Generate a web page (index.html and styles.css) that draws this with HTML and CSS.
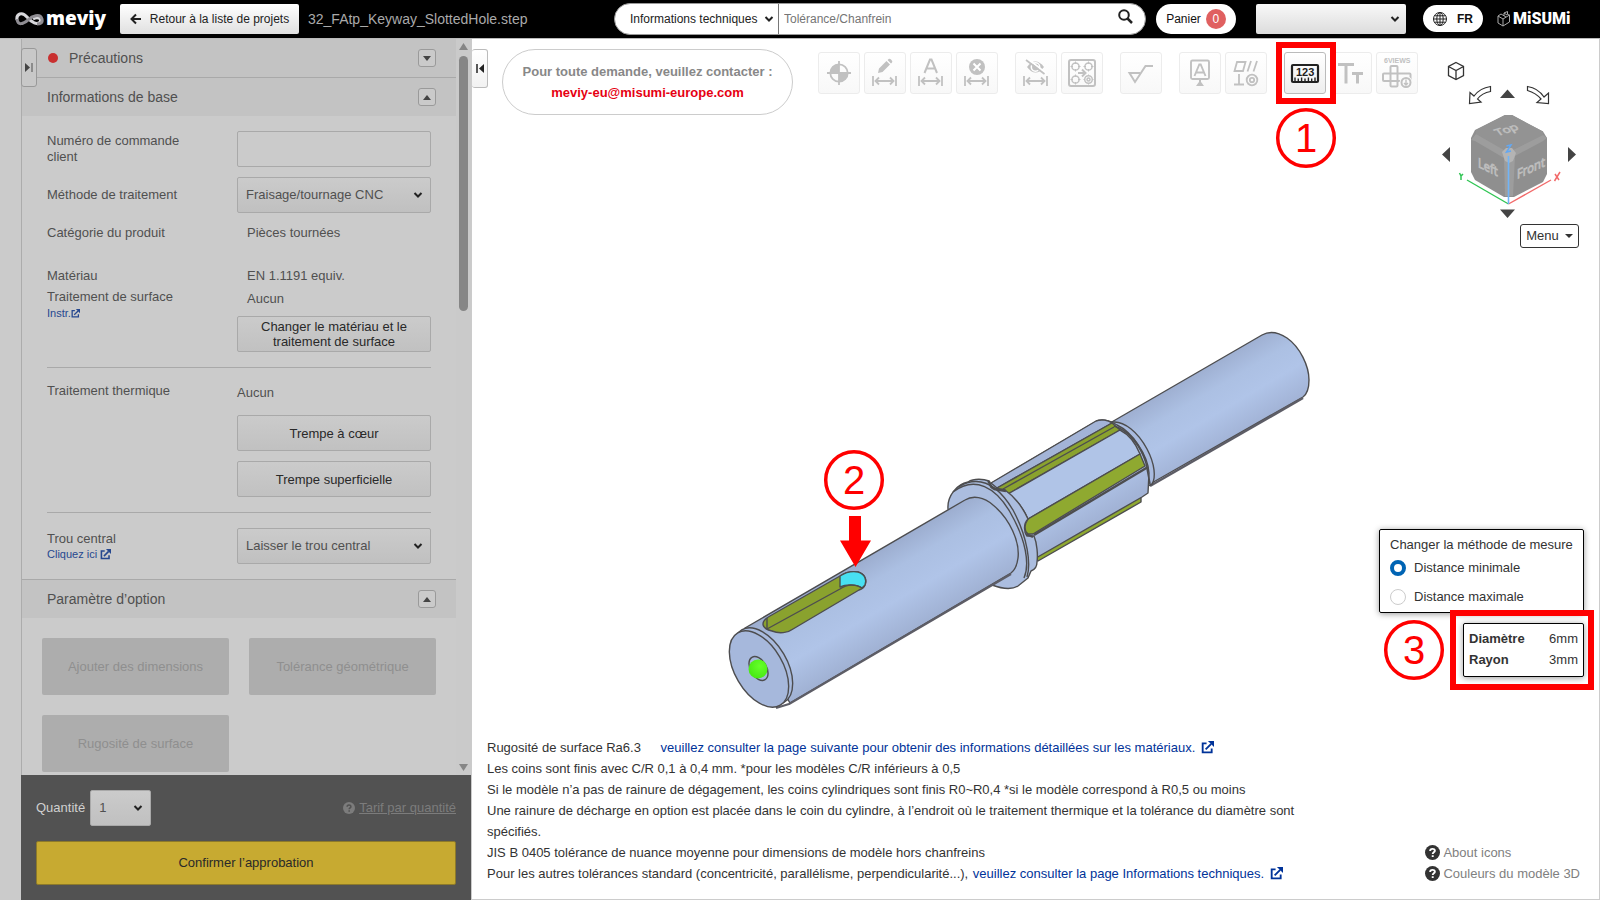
FILE: index.html
```html
<!DOCTYPE html>
<html lang="fr">
<head>
<meta charset="utf-8">
<title>meviy</title>
<link rel="stylesheet" href="styles.css">
</head>
<body>
<svg class="defs" width="0" height="0" aria-hidden="true">
  <symbol id="chev" viewBox="0 0 10 8"><path d="M1.500 2 5 5.500 8.500 2" fill="none" stroke="#222" stroke-width="2"/></symbol>
  <symbol id="ext" viewBox="0 0 14 14"><path d="M6 2.500H1.800V12.200H11.500V8M5 9 11 3" fill="none" stroke="currentColor" stroke-width="2"/><path d="M7.500 0H14V6.500Z" fill="currentColor"/></symbol>
  <symbol id="help" viewBox="0 0 14 14"><circle cx="7" cy="7" r="7" fill="currentColor"/><path class="help-mark" d="M4.800 5.600C4.800 2.900 9.200 3 9.200 5.400 9.200 6.900 7.200 6.800 7.200 8.400M7.200 9.600V11.300" fill="none" stroke-width="1.800"/></symbol>
  <symbol id="dim" viewBox="0 0 42 42"><path d="M9 24V34M32 24V34M11.500 29H29.500M15 25.500 11.500 29 15 32.500M26 25.500 29.500 29 26 32.500" fill="none" stroke="currentColor" stroke-width="1.800"/></symbol>
</svg>

<header class="topbar">
  <a class="brand" href="#" aria-label="meviy">
    <svg width="30" height="18" viewBox="0 0 30 18"><path d="M2 10C1 4 7 1 12 7C17 13 22 15 25 12C27 9 23 6 18 9" fill="none" stroke="#d8d8dc" stroke-width="3"/><path d="M2 9C3 16 8 14 13 10C17 6 25 3 27 9C28 13 25 14 22 14" fill="none" stroke="#8f8d93" stroke-width="3"/></svg>
    <span>meviy</span>
  </a>
  <button class="back" type="button"><svg width="12" height="12" viewBox="0 0 12 12"><path d="M11 6H2M6 1.500 1.500 6 6 10.500" fill="none" stroke="#222" stroke-width="2"/></svg>Retour à la liste de projets</button>
  <span class="filename">32_FAtp_Keyway_SlottedHole.step</span>
  <form class="search">
    <div class="pick pick-search"><select aria-label="Type de recherche"><option>Informations techniques</option></select><svg width="10" height="8"><use href="#chev"/></svg></div>
    <input type="text" aria-label="Recherche" placeholder="Tolérance/Chanfrein">
    <button type="button" aria-label="Rechercher"><svg width="15" height="15" viewBox="0 0 15 15"><circle cx="6" cy="6" r="4.800" fill="none" stroke="#222" stroke-width="2"/><path d="M9.500 9.500 14 14" stroke="#222" stroke-width="2.500"/></svg></button>
  </form>
  <button class="cart" type="button">Panier <span>0</span></button>
  <div class="pick pick-account"><select aria-label="Compte"><option></option></select><svg width="10" height="8"><use href="#chev"/></svg></div>
  <button class="lang" type="button"><svg width="14" height="14" viewBox="0 0 14 14" fill="none" stroke="#222"><circle cx="7" cy="7" r="6.500"/><ellipse cx="7" cy="7" rx="3.200" ry="6.500"/><path d="M.5 7H13.500M7 .5V13.500M1.500 3.800H12.500M1.500 10.200H12.500"/></svg>FR</button>
  <a class="misumi" href="#"><svg width="14" height="16" viewBox="0 0 14 16" fill="none" stroke="#aaa"><path d="M1 5 6 8V15L1 12ZM6 15 12.500 11V4L6 8M1 5 4 3 9 6M7 5V2L10.500.5V3.500L12.500 4M7 2 10 4"/></svg><span>MiSUMi</span></a>
</header>

<div class="workspace">
  <aside class="sidebar">
    <button class="side-tab" type="button" aria-label="Replier"><svg width="8" height="9" viewBox="0 0 8 9"><path d="M0 0 5 4.500 0 9Z" fill="#444"/><path d="M7 0V9" stroke="#777" stroke-width="1.500"/></svg></button>
    <div class="scroll">
      <div class="panel">
        <section>
          <h2 class="bar bar-first"><i class="dot"></i>Précautions<button type="button" aria-label="Déplier"><svg width="8" height="5" viewBox="0 0 8 5"><path d="M0 0H8L4 5Z"/></svg></button></h2>
        </section>
        <section>
          <h2 class="bar">Informations de base<button type="button" aria-label="Replier"><svg width="8" height="5" viewBox="0 0 8 5"><path d="M0 5H8L4 0Z"/></svg></button></h2>
          <div class="fields">
            <div class="row mid"><label for="ord">Numéro de commande<br>client</label><input id="ord" type="text"></div>
            <div class="row mid"><label for="meth">Méthode de traitement</label><div class="pick"><select id="meth"><option>Fraisage/tournage CNC</option></select><svg width="10" height="8"><use href="#chev"/></svg></div></div>
            <div class="row category"><span>Catégorie du produit</span><span class="val">Pièces tournées</span></div>
            <div class="row material"><span>Matériau</span><span class="val">EN 1.1191 equiv.</span></div>
            <div class="row surface">
              <div>Traitement de surface<a class="tight" href="#">Instr.<svg width="9" height="9"><use href="#ext"/></svg></a></div>
              <div class="stack"><span class="val">Aucun</span><button type="button">Changer le matériau et le<br>traitement de surface</button></div>
            </div>
            <hr>
            <div class="row thermal">
              <span>Traitement thermique</span>
              <div class="stack"><span>Aucun</span><button type="button">Trempe à cœur</button><button type="button">Trempe superficielle</button></div>
            </div>
            <hr>
            <div class="row mid">
              <div><label for="hole">Trou central</label><a href="#">Cliquez ici <svg width="11" height="11"><use href="#ext"/></svg></a></div>
              <div class="pick"><select id="hole"><option>Laisser le trou central</option></select><svg width="10" height="8"><use href="#chev"/></svg></div>
            </div>
          </div>
        </section>
        <section>
          <h2 class="bar bar-top">Paramètre d’option<button type="button" aria-label="Replier"><svg width="8" height="5" viewBox="0 0 8 5"><path d="M0 5H8L4 0Z"/></svg></button></h2>
          <div class="options">
            <button type="button" disabled>Ajouter des dimensions</button>
            <button type="button" disabled>Tolérance géométrique</button>
            <button type="button" disabled>Rugosité de surface</button>
          </div>
        </section>
      </div>
      <div class="track">
        <svg width="9" height="7" viewBox="0 0 9 7"><path d="M4.500 0 9 7H0Z"/></svg>
        <div class="thumb"></div>
        <svg width="9" height="7" viewBox="0 0 9 7"><path d="M0 0H9L4.500 7Z"/></svg>
      </div>
    </div>
    <footer class="order">
      <div class="qty">
        <label for="qty">Quantité</label>
        <div class="pick pick-qty"><select id="qty"><option>1</option></select><svg width="10" height="8"><use href="#chev"/></svg></div>
        <a href="#"><svg width="12" height="12"><use href="#help"/></svg><u>Tarif par quantité</u></a>
      </div>
      <button class="confirm" type="button">Confirmer l’approbation</button>
    </footer>
  </aside>

  <main class="viewer">
    <svg class="model" viewBox="472 39 1127 860" role="img" aria-label="Modèle 3D">
      <defs>
        <linearGradient id="s1" gradientUnits="userSpaceOnUse" x1="855" y1="564" x2="899" y2="639"><stop offset="0" stop-color="#9cadcf"/><stop offset=".28" stop-color="#abbfe2"/><stop offset=".6" stop-color="#b0c4e8"/><stop offset="1" stop-color="#a0b1d3"/></linearGradient>
        <linearGradient id="s2" gradientUnits="userSpaceOnUse" x1="1189" y1="378" x2="1227" y2="442"><stop offset="0" stop-color="#9fb0d2"/><stop offset=".3" stop-color="#acc0e3"/><stop offset=".6" stop-color="#b0c4e8"/><stop offset="1" stop-color="#a2b3d6"/></linearGradient>
        <radialGradient id="ball" cx=".6" cy=".35" r=".7"><stop offset="0" stop-color="#66ff2a"/><stop offset="1" stop-color="#46e812"/></radialGradient>
      </defs>
      <g stroke="#4d4d4f" stroke-width="1.400" stroke-linejoin="round">
        <path d="M1110 423 1262 335C1269 331 1278 332 1287 338C1300 347 1309 366 1309 380C1309 389 1307 394 1303 397L1150 484Z" fill="url(#s2)"/>
        <path d="M1303 398 1150 486" stroke="#5d5d66" stroke-width="2.500" fill="none"/>
        <path d="M1113 422C1124 421 1138 432 1147 449C1155 464 1156 478 1152 484L1140 490 1100 425Z" fill="#a9bbdf"/>
        <path d="M1035 557 1130 502 1141 497V502L1038 561Z" fill="#8fa930"/>
        <path d="M990 484 1095 422C1101 418 1110 420 1117 425C1132 432 1148 455 1149 473L1148 493 1142 497 1036 558 1005 520Z" fill="url(#s2)"/>
        <path d="M991 483 1096 421C1101 419 1108 420 1112 423L997 488Z" fill="#a3b4d7"/>
        <path d="M997 488 1112 423 1120 430 1008 494Z" fill="#8aa22e"/><path d="M1003 489 1114 427"/>
        <path d="M1008 494 1120 430C1130 435 1136 444 1140 454L1028 519C1023 508 1015 498 1008 494Z" fill="#b0c4e7"/>
        <path d="M1028 519 1140 454 1145 466 1033 534H1028C1023 530 1025 523 1028 519Z" fill="#8fa930"/>
        <path d="M1034 535 1148 467" stroke-width="2.400"/>
        <path d="M1114 426C1129 430 1141 447 1146 463L1150 484M1124 431C1133 436 1142 449 1146 462" fill="none" stroke-width="1.600"/>
        <path d="M948 509C947 496 957 484 968 482C974 478 984 479 989 481C991 482 989 486 993 488C997 490 1000 488 1005 490C1015 497 1023 508 1028 519C1023 524 1024 532 1027 536L1034 536C1037 543 1038 555 1037 562C1037 567 1034 570 1031 571L1028 578 1018 586C1010 591 1000 588 992 585Z" fill="#abbddf"/>
        <path d="M988 481C991 484 989 487 994 489L1006 491M1026 534 1033 537" fill="none" stroke-width="2.400"/>
        <path d="M953 492C975 475 996 488 1010 512C1026 540 1030 564 1024 578M958 487C980 474 998 485 1013 510C1028 538 1031 564 1027 577" fill="none"/>
        <path d="M745 628 965 500C973 495 984 497 993 505C1010 519 1020 542 1018 558C1017 566 1015 570 1011 573L790 703Z" fill="url(#s1)"/>
        <path d="M1011 574 789 704 776 708" fill="none" stroke="#5d5d66" stroke-width="2.200"/>
        <ellipse cx="763" cy="666" rx="24" ry="42" transform="rotate(-30.400 763 666)" fill="#a8badd"/>
        <ellipse cx="759" cy="669" rx="24" ry="42" transform="rotate(-30.400 759 669)" fill="#a6b8dc"/>
        <ellipse cx="758.500" cy="668.500" rx="8" ry="13" transform="rotate(-30.400 758.500 668.500)" fill="#a6b8dc"/>
        <path d="M770 616 840 576C846 572 852 571 858 572C865 574 867 580 865 585C864 588 862 589 859 590L793 629C788 633 779 634 772 631C762 629 759 622 770 616Z" fill="#8aa22e"/>
        <path d="M840 576C846 572 852 571 858 572C865 574 867 580 865 585L862 588C856 584 846 584 840 587Z" fill="#48e0f2"/>
        <path d="M767 618V629L840 589C847 584 857 584 862 588" fill="none"/>
      </g>
      <circle cx="758" cy="669" r="9.500" fill="url(#ball)"/>
    </svg>

    <button class="side-tab view-tab" type="button" aria-label="Replier"><svg width="8" height="9" viewBox="0 0 8 9"><path d="M8 0 3 4.500 8 9Z" fill="#222"/><path d="M1 0V9" stroke="#222" stroke-width="1.500"/></svg></button>

    <div class="head">
      <div class="contact"><b>Pour toute demande, veuillez contacter :</b><a href="#">meviy-eu@misumi-europe.com</a></div>
      <div class="tools">
        <div>
          <button type="button" disabled aria-label="Origine"><svg viewBox="0 0 42 42"><circle cx="21" cy="21" r="8.700" fill="none" stroke="currentColor" stroke-width="1.800"/><path d="M21 21V12A9 9 0 0 0 12 21ZM21 21V30A9 9 0 0 0 30 21Z" fill="currentColor"/><path d="M21 9V33M9 21H33" stroke="currentColor" stroke-width="1.800"/></svg></button>
          <button type="button" disabled aria-label="Modifier la cote"><svg viewBox="0 0 42 42"><use href="#dim"/><path d="M14 21 15 16.500 22.500 9 26 12.500 18.500 20ZM23.500 8 25 6.800Q26 6.500 27.500 8 29 9.500 28 10.500L27 11.500Z" fill="currentColor"/></svg></button>
          <button type="button" disabled aria-label="Texte de cote"><svg viewBox="0 0 42 42"><use href="#dim"/><path d="M14.500 21 20 7.500H21.500L27 21M16.500 16.500H25" fill="none" stroke="currentColor" stroke-width="2"/></svg></button>
          <button type="button" disabled aria-label="Supprimer la cote"><svg viewBox="0 0 42 42"><use href="#dim"/><circle cx="21" cy="15" r="8" fill="currentColor"/><path d="M17.500 11.500 24.500 18.500M24.500 11.500 17.500 18.500" stroke="#fff" stroke-width="2"/></svg></button>
        </div>
        <div>
          <button type="button" disabled aria-label="Masquer les cotes"><svg viewBox="0 0 42 42"><use href="#dim"/><path d="M12 15Q20.500 4 29 15 20.500 26 12 15Z" fill="currentColor"/><circle cx="20.500" cy="15" r="4.200" fill="none" stroke="#fff" stroke-width="1.500"/><path d="M13 7 31 21" stroke="#fff" stroke-width="1.800"/><path d="M11 8 29.500 22" stroke="currentColor" stroke-width="1.700"/></svg></button>
          <button type="button" disabled aria-label="Grouper les trous"><svg viewBox="0 0 42 42" fill="none" stroke="currentColor" stroke-width="1.500"><rect x="8" y="8" width="26" height="26" rx="2" stroke-width="2"/><circle cx="14.500" cy="14.500" r="3.600"/><circle cx="27.500" cy="14.500" r="3.600"/><circle cx="14.500" cy="27.500" r="3.600"/><circle cx="27.500" cy="27.500" r="3.800"/><circle cx="27.500" cy="27.500" r="1.500"/><path d="M14.500 9.500V12M14.500 17V19.500M9.500 14.500H12M17 14.500H19.500M27.500 9.500V12M27.500 17V19.500M22.500 14.500H25M30 14.500H32.500M14.500 22.500V25M14.500 30V32.500M9.500 27.500H12M17 27.500H19.500M22.500 27.500H24M31 27.500H32.500M27.500 22.500V24M27.500 31V32.500" stroke-width="1"/><path d="M17 21H24M21 17.500 24.500 21 21 24.500" stroke-width="2"/></svg></button>
        </div>
        <div>
          <button type="button" disabled aria-label="Rugosité"><svg viewBox="0 0 42 42"><path d="M20 21H9.500L15 30 25.500 14H33" fill="none" stroke="currentColor" stroke-width="2"/></svg></button>
        </div>
        <div>
          <button type="button" disabled aria-label="Référence"><svg viewBox="0 0 42 42"><path d="M13.500 8.500H28.500Q30 8.500 30 10V25.500Q30 27 28.500 27H13.500Q12 27 12 25.500V10Q12 8.500 13.500 8.500ZM15.500 24 20.300 12.500H21.700L26.500 24M17.500 20.500H24.500" fill="none" stroke="currentColor" stroke-width="1.900"/><path d="M21 27V31" stroke="currentColor" stroke-width="2"/><path d="M21 28.500 25 34H17Z" fill="currentColor"/></svg></button>
          <button type="button" disabled aria-label="Tolérance géométrique"><svg viewBox="0 0 42 42" fill="none" stroke="currentColor" stroke-width="1.800"><path d="M12 10H20.500L18 19H9.500ZM26 9 22.500 19.500M32 9 28.500 19.500M9 32.500H19M14 22V32.500"/><circle cx="27" cy="28" r="5.300"/><circle cx="27" cy="28" r="2.200"/></svg></button>
        </div>
        <div>
          <button class="active" type="button" aria-label="Mesurer"><svg viewBox="0 0 42 42"><rect x="8" y="13" width="26" height="17" rx="1" fill="none" stroke="#222" stroke-width="2.200"/><path d="M11 29V25.500M14.300 29V26.500M17.600 29V25.500M21 29V26.500M24.400 29V25.500M27.700 29V26.500M31 29V25.500" stroke="#222" stroke-width="1.400"/><text x="12" y="24" class="measure">123</text></svg></button>
          <button type="button" disabled aria-label="Taille du texte"><svg viewBox="0 0 42 42"><path d="M8 12.500H24M16 12.500V31.500M22 21.500H33M27.500 21.500V31.500" fill="none" stroke="currentColor" stroke-width="3"/></svg></button>
          <button type="button" disabled aria-label="Six vues"><svg viewBox="0 0 42 42" fill="none" stroke="currentColor" stroke-width="2"><text x="8" y="11" class="views">6VIEWS</text><rect x="7" y="21.500" width="27.500" height="7.500" rx="1"/><rect x="14.500" y="14" width="7" height="20.500" rx="1"/><circle cx="30" cy="30.500" r="6.500" fill="#fbfbfb" stroke="none"/><circle cx="30" cy="30.500" r="4.500"/><path d="M30 27.500V33M28 31 30 33 32 31" stroke-width="1.400"/></svg></button>
        </div>
      </div>
    </div>

    <div class="navigator">
      <svg width="152" height="164" viewBox="1432 56 152 164" role="img" aria-label="Cube de vue">
        <path d="M1456 62.500 1463.500 66.500V75.500L1456 79.500 1448.500 75.500V66.500ZM1448.500 66.500 1456 70.500 1463.500 66.500M1456 70.500V79.500" fill="#fff" stroke="#333" stroke-width="1.300"/>
        <path d="M1490.500 86.500Q1480 88 1474 96L1470 92.500 1469.500 103.500 1481 102 1477.500 99Q1482 93 1490.500 91.500ZM1527.500 86.500Q1538 88 1544 97L1548.500 93 1548.500 103.500 1537 102.500 1541 99Q1536 93 1527.500 90.500Z" fill="#fff" stroke="#333" stroke-width="1.200"/>
        <path d="M1507.500 89.500 1515 98H1500ZM1507.500 218 1500 209.500H1515ZM1442 154.500 1450 147V162ZM1576 154.500 1568 147V162Z" fill="#444"/>
        <path d="M1505 115 1512 115 1543 131.500 1547 138V174L1543 182 1514 197H1504L1475 180 1471 172V138L1475 130Z" fill="#8f8f8f"/>
        <path d="M1505 115 1512 115 1543 131.500 1543 135 1513 150 1509 148 1504 150 1476 134V130Z" fill="#939393"/>
        <path d="M1471 140 1476 134 1504 150 1509 148 1513 150 1543 135 1547 138 1543 141 1515 156 1513 196H1505L1504 158 1475 141Z" fill="#9d9d9d"/>
        <path d="M1502 152 1506 148H1512L1516 153 1513 161 1509 163 1505 161Z" fill="#b4b4b4"/>
        <g class="faces"><text transform="matrix(.94 -.3 .5 .65 1498 136)">Top</text><text transform="matrix(.86 .4 0 1 1478 167)">Left</text><text transform="matrix(.86 -.4 0 1 1517 179)">Front</text></g>
        <path d="M1508.500 204 1467 180" stroke="#2fc553" stroke-width="1.400"/><path d="M1508.500 204 1551 180" stroke="#f26a6a" stroke-width="1.400"/><path d="M1508.500 204V156" stroke="#70b4f8" stroke-width="1.600"/>
        <g fill="none" stroke-width="1.500"><path d="M1506.500 146 1511 145 1506.500 152 1511 151" stroke="#62a8f4"/><path d="M1459.500 173 1461 176 1463 174M1461 176V180" stroke="#2fc553"/><path d="M1555 174 1559 180M1560 172 1554.500 181" stroke="#f26a6a"/></g>
      </svg>
      <button class="menu" type="button">Menu <svg width="8" height="4" viewBox="0 0 8 4"><path d="M0 0H8L4 4Z" fill="#333"/></svg></button>
    </div>

    <div class="readout">
      <fieldset class="box method">
        <legend>Changer la méthode de mesure</legend>
        <label><input type="radio" name="d" checked>Distance minimale</label>
        <label><input type="radio" name="d">Distance maximale</label>
      </fieldset>
      <div class="box result"><table><tr><th>Diamètre</th><td>6mm</td></tr><tr><th>Rayon</th><td>3mm</td></tr></table></div>
    </div>

    <div class="foot">
      <div class="notes">
        <p>Rugosité de surface Ra6.3 <a class="apart" href="#">veuillez consulter la page suivante pour obtenir des informations détaillées sur les matériaux. <svg width="13" height="13"><use href="#ext"/></svg></a></p>
        <p>Les coins sont finis avec C/R 0,1 à 0,4 mm. *pour les modèles C/R inférieurs à 0,5</p>
        <p>Si le modèle n’a pas de rainure de dégagement, les coins cylindriques sont finis R0~R0,4 *si le modèle correspond à R0,5 ou moins</p>
        <p>Une rainure de décharge en option est placée dans le coin du cylindre, à l’endroit où le traitement thermique et la tolérance du diamètre sont spécifiés.</p>
        <p>JIS B 0405 tolérance de nuance moyenne pour dimensions de modèle hors chanfreins</p>
        <p>Pour les autres tolérances standard (concentricité, parallélisme, perpendicularité...), <a href="#">veuillez consulter la page Informations techniques. <svg width="13" height="13"><use href="#ext"/></svg></a></p>
      </div>
      <div class="legend">
        <a href="#"><svg width="15" height="15"><use href="#help"/></svg>About icons</a>
        <a href="#"><svg width="15" height="15"><use href="#help"/></svg>Couleurs du modèle 3D</a>
      </div>
    </div>
  </main>
</div>

<svg class="callouts" viewBox="0 0 1600 900">
  <g fill="none" stroke="#f00"><rect x="1279" y="45" width="54" height="56" stroke-width="6"/><rect x="1453" y="613" width="138" height="74" stroke-width="6"/><g stroke-width="3.500"><circle cx="1306" cy="138" r="28.300"/><circle cx="854" cy="480" r="28.300"/><circle cx="1414" cy="650" r="28.300"/></g></g>
  <path d="M849 516H861V540.500H871L855.500 567 840 540.500H849Z" fill="#f00"/>
  <g class="num"><text x="1306" y="152">1</text><text x="854" y="494">2</text><text x="1414" y="664">3</text></g>
</svg>
</body>
</html>
```
FILE: styles.css
```css
* { box-sizing: border-box; }
body { margin: 0; height: 100vh; display: flex; flex-direction: column; position: relative; overflow: hidden; background: #fff; color: #333; font: 13px/16px "Liberation Sans", Arial, sans-serif; }
button, input, select { font: inherit; color: inherit; margin: 0; padding: 0; }
button { border: 0; background: none; }
a { color: #003399; text-decoration: none; }
.defs { position: absolute; }
.help-mark { stroke: var(--mark, #fff); }

.pick { display: grid; align-items: center; }
.pick > * { grid-area: 1 / 1; }
.pick > svg { justify-self: end; margin-right: 8px; pointer-events: none; }
.pick select { appearance: none; width: 100%; height: 36px; padding: 0 8px; border: 1px solid #a9a9a9; border-radius: 2px; background: linear-gradient(#cbcbcb, #c0c0c0); }

.topbar { flex: none; height: 39px; padding-left: 15px; padding-bottom: 1px; display: flex; align-items: center; background: #000; border-bottom: 1px solid #bbb; font-size: 12px; }
.brand { width: 105px; display: flex; align-items: center; gap: 1px; color: #fff; font: 800 19px/24px "Open Sans", sans-serif; }
.brand span { margin-top: -2px; }
.back { width: 179px; height: 30px; display: flex; align-items: center; justify-content: center; gap: 8px; border-radius: 2px; background: linear-gradient(#fff, #e0e0e0); color: #222; }
.filename { width: 315px; padding-left: 9px; font-size: 14px; color: #aaa; }
.search { width: 532px; height: 32px; display: flex; align-items: center; border-radius: 16px; background: #fff; overflow: hidden; border: 1px solid #999; }
.pick-search { width: 164px; border-right: 1px solid #777; }
.pick-search select { border: 0; background: none; padding: 0 0 0 15px; color: #222; }
.pick-search > svg { margin-right: 4px; }
.search input { flex: 1; border: 0; padding-left: 5px; outline: 0; }
.search input::placeholder { color: #757575; }
.search button { width: 40px; height: 30px; }
.cart { width: 80px; height: 30px; margin-left: 10px; display: flex; align-items: center; justify-content: center; gap: 5px; border-radius: 15px; background: #fff; color: #111; }
.cart span { width: 20px; height: 20px; line-height: 20px; border-radius: 50%; background: #e06060; color: #fff; }
.pick-account { width: 150px; margin-left: 20px; }
.pick-account select { height: 30px; border: 0; background: linear-gradient(#f8f8f8, #dcdcdc); }
.pick-account > svg { margin-right: 6px; }
.lang { width: 60px; height: 27px; margin-left: 17px; display: flex; align-items: center; justify-content: center; gap: 10px; border-radius: 14px; background: #fff; color: #111; font-weight: bold; }
.misumi { margin-left: 14px; display: flex; align-items: center; gap: 2px; color: #fff; font: 900 16px/20px Roboto, sans-serif; }

.workspace { flex: 1; min-height: 0; display: flex; }
.sidebar { flex: none; width: 472px; padding: 0 1px 0 21px; display: flex; flex-direction: column; position: relative; background: #cbcbcb; color: #505050; }
.side-tab { position: absolute; left: 21px; top: 9px; width: 16px; height: 39px; display: grid; place-items: center; border: 1px solid #999; border-radius: 3px; background: #c8c8c8; }
.view-tab { left: 0; top: 10px; border-color: #bbb; border-left: 0; background: linear-gradient(#fff, #f2f2f2); }
.scroll { flex: 1; min-height: 0; display: flex; overflow: hidden; border-left: 1px solid #acacac; }
.panel { flex: 1; }
.track { width: 15px; padding: 4px 3px; display: flex; flex-direction: column; align-items: center; background: #cacaca; }
.track svg { flex: none; fill: #868686; }
.thumb { width: 9px; height: 255px; margin: 6px 0 auto; border-radius: 5px; background: #868686; }
.bar { margin: 0; height: 38px; padding: 0 20px 0 25px; display: flex; align-items: center; background: #c3c3c3; font-size: 14px; font-weight: normal; }
.bar button { margin-left: auto; width: 18px; height: 18px; display: grid; place-items: center; border: 1px solid #9a9a9a; border-radius: 3px; background: #cacaca; }
.bar svg { fill: #444; }
.bar-first { height: 39px; border-bottom: 1px solid #a9a9a9; }
.bar-top { height: 39px; border-top: 1px solid #a9a9a9; }
.dot { width: 10px; height: 10px; margin: 0 11px 0 1px; border-radius: 50%; background: #c93030; }
.fields { padding: 15px 25px; display: flex; flex-direction: column; gap: 10px; }
.row { display: grid; grid-template-columns: 190px 1fr; }
.mid { align-items: center; }
.row input { height: 36px; border: 1px solid #a9a9a9; border-radius: 2px; background: #cbcbcb; padding: 0 8px; min-width: 0; }
.row a { display: flex; align-items: center; gap: 3px; font-size: 11px; line-height: 14px; color: #26488f; }
.row a.tight { gap: 0; line-height: 16px; }
.val { padding-left: 10px; }
.category { margin-top: 2px; }
.material { margin-top: 17px; }
.surface { margin-top: -5px; }
.stack { display: flex; flex-direction: column; gap: 10px; padding-top: 2px; }
.surface .stack { gap: 9px; }
.stack button { height: 36px; border: 1px solid #a9a9a9; border-radius: 2px; background: linear-gradient(#cbcbcb, #c1c1c1); color: #292929; line-height: 15px; }
.fields hr { width: 100%; margin: 5px 0; border: 0; border-top: 1px solid #a9a9a9; }
.thermal .stack span { margin-bottom: 4px; }
.options { padding: 20px; display: grid; grid-template-columns: 1fr 1fr; gap: 20px; }
.options button { height: 57px; border-radius: 2px; background: #adadad; color: #8f8f8f; }
.order { padding: 15px; background: #525252; color: #d0d0d0; }
.qty { display: flex; align-items: center; gap: 5px; margin-bottom: 15px; }
.pick-qty { width: 61px; color: #505050; }
.qty a { margin-left: auto; display: flex; align-items: center; gap: 4px; color: #7c7c7c; --mark: #525252; }
.confirm { display: block; width: 100%; height: 44px; border: 1px solid #8d7a2a; border-radius: 2px; background: #c7aa31; color: #292929; }

.viewer { flex: 1; min-width: 0; position: relative; display: flex; flex-direction: column; justify-content: space-between; border: solid #ccc; border-width: 0 1px 1px 0; }
.model { position: absolute; inset: 0; width: 100%; height: 100%; }
.head { position: relative; padding: 10px 0 0 30px; display: flex; gap: 25px; align-items: flex-start; }
.contact { width: 291px; height: 66px; display: flex; flex-direction: column; align-items: center; justify-content: center; gap: 5px; border: 1px solid #ccc; border-radius: 33px; color: #888; }
.contact a { color: #e60012; font-weight: bold; }
.tools { display: flex; gap: 17px; padding-top: 3px; }
.tools > div { display: flex; gap: 4px; }
.tools button { width: 42px; height: 42px; border: 1px solid #ececec; border-radius: 3px; background: linear-gradient(#fff, #f8f8f8); color: #c1c1c1; }
.tools button svg { display: block; width: 42px; height: 42px; margin: -1px; }
.tools .active { border-color: #bbb; background: linear-gradient(#fff, #eee); }
.measure { font: bold 11px/11px "Liberation Sans", sans-serif; fill: #222; }
.views { font: bold 7px/7px "Liberation Sans", sans-serif; fill: #c1c1c1; stroke: none; }
.navigator { position: absolute; right: 15px; top: 17px; display: flex; flex-direction: column; align-items: flex-end; gap: 4px; }
.navigator > svg { display: block; }
.faces text { font: 13px/13px "Open Sans", sans-serif; fill: #858585; stroke: #bdbdbd; stroke-width: 1px; }
.menu { width: 59px; height: 24px; margin-right: 5px; display: flex; align-items: center; justify-content: center; gap: 6px; border: 1px solid #333; border-radius: 3px; background: #fff; }
.readout { position: absolute; right: 15px; bottom: 222px; display: flex; flex-direction: column; align-items: flex-end; gap: 10px; }
.box { margin: 0; border: 1px solid #000; border-radius: 2px; background: #fff; box-shadow: 0 1px 6px rgba(0, 0, 0, .4); }
.method { width: 205px; height: 84px; padding: 7px 10px; }
.method legend { float: left; width: 100%; padding: 0; }
.method label { clear: both; display: flex; align-items: center; gap: 8px; height: 29px; }
.method input { appearance: none; width: 16px; height: 16px; border: 1px solid #ccc; border-radius: 50%; }
.method input:checked { border: 4px solid #0064b4; }
.result { width: 121px; padding: 4px 5px 6px; line-height: 21px; }
.result table { width: 100%; border-collapse: collapse; }
.result th, .result td { padding: 0; text-align: left; }
.result td { text-align: right; }
.foot { position: relative; padding: 0 19px 15px 15px; display: flex; justify-content: space-between; align-items: flex-end; line-height: 21px; }
.notes { max-width: 820px; }
.notes p { margin: 0; }
.notes svg { vertical-align: -2px; margin-left: 2px; }
.notes a { margin-left: 1px; }
.notes .apart { margin-left: 16px; }
.legend a { display: flex; align-items: center; gap: 3px; color: #808080; }
.legend svg { color: #333; }
.callouts { position: absolute; inset: 0; width: 100%; height: 100%; pointer-events: none; }
.num text { font: 40px/40px "Liberation Sans", sans-serif; fill: #f00; text-anchor: middle; }
```
